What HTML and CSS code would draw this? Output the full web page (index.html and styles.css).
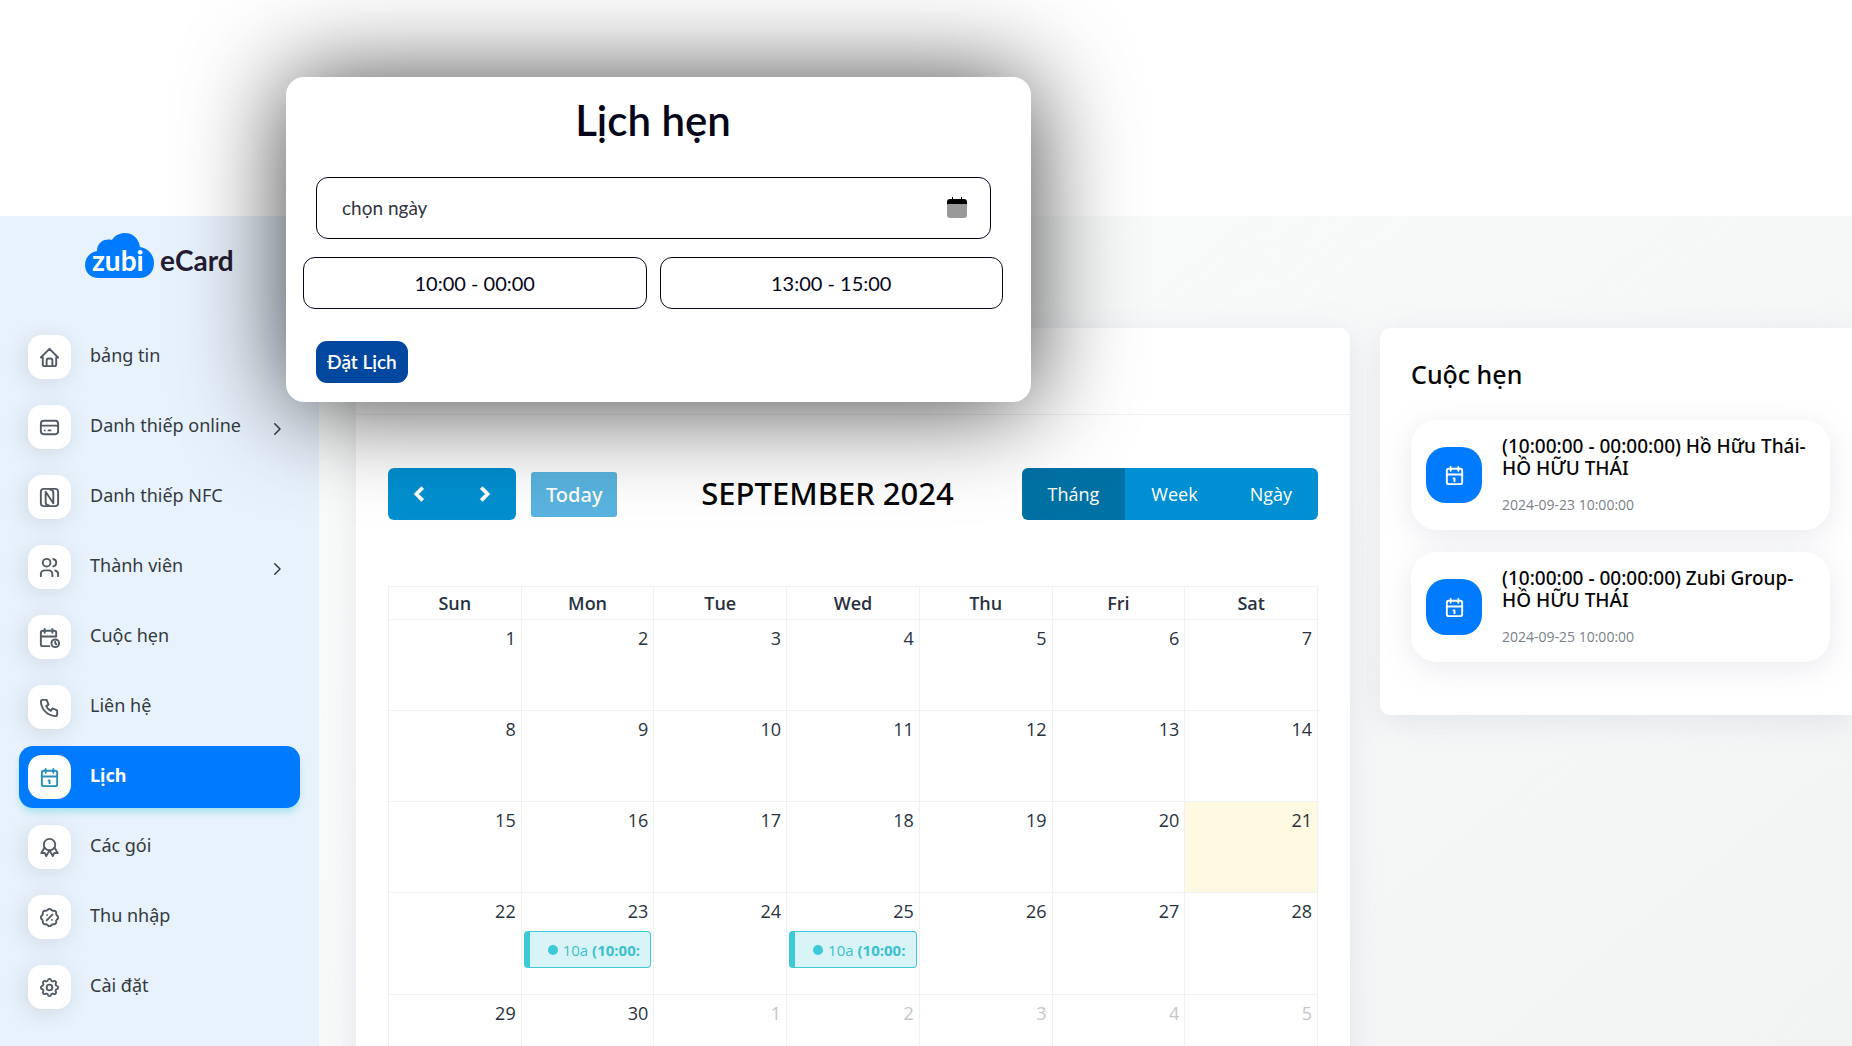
FILE: index.html
```html
<!DOCTYPE html>
<html lang="vi">
<head>
  <meta charset="UTF-8">
  <meta name="viewport" content="width=device-width, initial-scale=1">
  <title>Zubi eCard - Lịch</title>
  <link rel="stylesheet" href="styles.css">
</head>
<body>

  <!-- icons used more than once -->
  <svg class="sprite" aria-hidden="true">
    <symbol id="icon-calendar" viewBox="0 0 24 24">
      <rect x="4" y="5" width="16" height="16" rx="2"/>
      <path d="M16 3v4M8 3v4M4 11h16M11 15h1v3"/>
    </symbol>
    <symbol id="icon-chevron" viewBox="0 0 24 24">
      <path d="M9 5l7 7-7 7"/>
    </symbol>
  </svg>

  <div class="dashboard">
    <aside class="sidebar">
      <a class="logo" href="#" aria-label="zubi eCard">
        <svg width="150" height="48" viewBox="0 0 150 48">
          <path fill="#007bff" d="M15 46C6 46 1 40 1 33c0-7 5-13 12-14C13 11 20 6 28 8 31 3 36 1 41 1c8 0 14 6 15 14 8 1 14 8 14 16 0 9-6 15-15 15z"/>
          <text class="logo-zubi" x="8" y="39">zubi</text>
          <text class="logo-ecard" x="76" y="39">eCard</text>
        </svg>
      </a>

      <nav class="menu">
        <a class="menu-item" href="#">
          <span class="menu-icon"><svg class="icon" viewBox="0 0 24 24"><path d="M5 12H3l9-9 9 9h-2M5 12v7a2 2 0 0 0 2 2h10a2 2 0 0 0 2-2v-7M9 21v-6a2 2 0 0 1 2-2h2a2 2 0 0 1 2 2v6"/></svg></span>
          <span class="menu-text">bảng tin</span>
        </a>
        <a class="menu-item" href="#">
          <span class="menu-icon"><svg class="icon" viewBox="0 0 24 24"><rect x="3" y="5" width="18" height="14" rx="3"/><path d="M3 10h18M7 15h.01M11 15h2"/></svg></span>
          <span class="menu-text">Danh thiếp online</span>
          <svg class="menu-arrow" viewBox="0 0 24 24"><use href="#icon-chevron"/></svg>
        </a>
        <a class="menu-item" href="#">
          <span class="menu-icon"><svg class="icon" viewBox="0 0 24 24"><path d="M11 20a3 3 0 0 1-3-3V6l8 12M13 4a3 3 0 0 1 3 3v11"/><rect x="3" y="3" width="18" height="18" rx="3"/></svg></span>
          <span class="menu-text">Danh thiếp NFC</span>
        </a>
        <a class="menu-item" href="#">
          <span class="menu-icon"><svg class="icon" viewBox="0 0 24 24"><circle cx="9" cy="7" r="4"/><path d="M3 21v-2a4 4 0 0 1 4-4h4a4 4 0 0 1 4 4v2M16 3.13a4 4 0 0 1 0 7.75M21 21v-2a4 4 0 0 0-3-3.85"/></svg></span>
          <span class="menu-text">Thành viên</span>
          <svg class="menu-arrow" viewBox="0 0 24 24"><use href="#icon-chevron"/></svg>
        </a>
        <a class="menu-item" href="#">
          <span class="menu-icon"><svg class="icon" viewBox="0 0 24 24"><path d="M11.8 21H5a2 2 0 0 1-2-2V7a2 2 0 0 1 2-2h12a2 2 0 0 1 2 2v4M15 3v4M7 3v4M3 11h16M18 16.5V18l1 1"/><circle cx="18" cy="18" r="4"/></svg></span>
          <span class="menu-text">Cuộc hẹn</span>
        </a>
        <a class="menu-item" href="#">
          <span class="menu-icon"><svg class="icon" viewBox="0 0 24 24"><path d="M5 4h4l2 5-2.5 1.5a11 11 0 0 0 5 5L15 13l5 2v4a2 2 0 0 1-2 2A16 16 0 0 1 3 6a2 2 0 0 1 2-2"/></svg></span>
          <span class="menu-text">Liên hệ</span>
        </a>
        <a class="menu-item active" href="#">
          <span class="menu-icon"><svg class="icon"><use href="#icon-calendar"/></svg></span>
          <span class="menu-text">Lịch</span>
        </a>
        <a class="menu-item" href="#">
          <span class="menu-icon"><svg class="icon" viewBox="0 0 24 24"><circle cx="12" cy="9" r="6"/><path d="M12 15l3.4 5.89 1.598-3.233 3.598.232-3.4-5.889M6.802 12l-3.4 5.89L7 17.657l1.598 3.232 3.4-5.889"/></svg></span>
          <span class="menu-text">Các gói</span>
        </a>
        <a class="menu-item" href="#">
          <span class="menu-icon"><svg class="icon" viewBox="0 0 24 24"><path d="M9 15l6-6M9.5 9.5v.01M14.5 14.5v.01M5 7.2A2.2 2.2 0 0 1 7.2 5h1a2.2 2.2 0 0 0 1.55-.64l.7-.7a2.2 2.2 0 0 1 3.12 0l.7.7a2.2 2.2 0 0 0 1.55.64h1a2.2 2.2 0 0 1 2.2 2.2v1a2.2 2.2 0 0 0 .64 1.55l.7.7a2.2 2.2 0 0 1 0 3.12l-.7.7a2.2 2.2 0 0 0-.64 1.55v1a2.2 2.2 0 0 1-2.2 2.2h-1a2.2 2.2 0 0 0-1.55.64l-.7.7a2.2 2.2 0 0 1-3.12 0l-.7-.7a2.2 2.2 0 0 0-1.55-.64h-1a2.2 2.2 0 0 1-2.2-2.2v-1a2.2 2.2 0 0 0-.64-1.55l-.7-.7a2.2 2.2 0 0 1 0-3.12l.7-.7A2.2 2.2 0 0 0 5 8.2z"/></svg></span>
          <span class="menu-text">Thu nhập</span>
        </a>
        <a class="menu-item" href="#">
          <span class="menu-icon"><svg class="icon" viewBox="0 0 24 24"><path d="M10.325 4.317c.426-1.756 2.924-1.756 3.35 0a1.724 1.724 0 0 0 2.573 1.066c1.543-.94 3.31.826 2.37 2.37a1.724 1.724 0 0 0 1.065 2.572c1.756.426 1.756 2.924 0 3.35a1.724 1.724 0 0 0-1.066 2.573c.94 1.543-.826 3.31-2.37 2.37a1.724 1.724 0 0 0-2.572 1.065c-.426 1.756-2.924 1.756-3.35 0a1.724 1.724 0 0 0-2.573-1.066c-1.543.94-3.31-.826-2.37-2.37a1.724 1.724 0 0 0-1.065-2.572c-1.756-.426-1.756-2.924 0-3.35a1.724 1.724 0 0 0 1.066-2.573c-.94-1.543.826-3.31 2.37-2.37 1 .608 2.296.07 2.572-1.065z"/><circle cx="12" cy="12" r="3"/></svg></span>
          <span class="menu-text">Cài đặt</span>
        </a>
      </nav>
    </aside>

    <main class="content">
      <section class="card calendar-card">
        <div class="card-header"></div>
        <div class="card-body">
          <div class="toolbar">
            <div class="toolbar-left">
              <div class="btn-group">
                <button class="btn-nav" type="button" aria-label="Tháng trước"><svg class="nav-icon" viewBox="0 0 24 24"><path d="M15 5l-7 7 7 7"/></svg></button>
                <button class="btn-nav" type="button" aria-label="Tháng sau"><svg class="nav-icon" viewBox="0 0 24 24"><use href="#icon-chevron"/></svg></button>
              </div>
              <button class="btn-today" type="button" disabled>Today</button>
            </div>
            <h2 class="toolbar-title">SEPTEMBER 2024</h2>
            <div class="btn-group">
              <button class="btn-view selected" type="button">Tháng</button>
              <button class="btn-view" type="button">Week</button>
              <button class="btn-view" type="button">Ngày</button>
            </div>
          </div>

          <table class="calendar">
            <thead>
              <tr><th>Sun</th><th>Mon</th><th>Tue</th><th>Wed</th><th>Thu</th><th>Fri</th><th>Sat</th></tr>
            </thead>
            <tbody>
              <tr><td>1</td><td>2</td><td>3</td><td>4</td><td>5</td><td>6</td><td>7</td></tr>
              <tr><td>8</td><td>9</td><td>10</td><td>11</td><td>12</td><td>13</td><td>14</td></tr>
              <tr><td>15</td><td>16</td><td>17</td><td>18</td><td>19</td><td>20</td><td class="today">21</td></tr>
              <tr class="has-events">
                <td>22</td>
                <td>23<a class="event" href="#"><span class="dot"></span><span class="event-text">10a <b>(10:00:</b></span></a></td>
                <td>24</td>
                <td>25<a class="event" href="#"><span class="dot"></span><span class="event-text">10a <b>(10:00:</b></span></a></td>
                <td>26</td><td>27</td><td>28</td>
              </tr>
              <tr><td>29</td><td>30</td><td class="other">1</td><td class="other">2</td><td class="other">3</td><td class="other">4</td><td class="other">5</td></tr>
            </tbody>
          </table>
        </div>
      </section>

      <section class="card side-card">
        <h4 class="side-title">Cuộc hẹn</h4>
        <ul class="appointments">
          <li class="appointment">
            <span class="appointment-icon"><svg class="icon"><use href="#icon-calendar"/></svg></span>
            <div class="appointment-info">
              <h5 class="appointment-name">(10:00:00 - 00:00:00) Hồ Hữu Thái-<br>HỒ HỮU THÁI</h5>
              <small class="appointment-date">2024-09-23 10:00:00</small>
            </div>
          </li>
          <li class="appointment">
            <span class="appointment-icon"><svg class="icon"><use href="#icon-calendar"/></svg></span>
            <div class="appointment-info">
              <h5 class="appointment-name">(10:00:00 - 00:00:00) Zubi Group-<br>HỒ HỮU THÁI</h5>
              <small class="appointment-date">2024-09-25 10:00:00</small>
            </div>
          </li>
        </ul>
      </section>
    </main>
  </div>

  <!-- booking popup -->
  <form class="popup">
    <h1 class="popup-title">Lịch hẹn</h1>
    <div class="date-field">
      <input class="date-input" type="text" placeholder="chọn ngày" aria-label="chọn ngày">
      <svg class="date-icon" width="20" height="21" viewBox="0 0 20 21" aria-hidden="true">
        <path fill="#999" d="M0 7h20v11a3 3 0 0 1-3 3H3a3 3 0 0 1-3-3z"/>
        <path fill="#000" d="M0 7V5a3 3 0 0 1 3-3h2V0h1v2h8V0h1v2h2a3 3 0 0 1 3 3v2z"/>
      </svg>
    </div>
    <div class="slots">
      <button class="slot" type="button">10:00 - 00:00</button>
      <button class="slot" type="button">13:00 - 15:00</button>
    </div>
    <button class="btn-book" type="submit">Đặt Lịch</button>
  </form>

</body>
</html>
```
FILE: styles.css
```css
* {
  box-sizing: border-box;
}

body {
  margin: 0;
  height: 100vh;
  overflow: hidden;
  background: #fff;
  color: #293240;
  font-family: "Open Sans", "Noto Sans", sans-serif;
  font-size: 18px;
}

button,
input {
  font-family: inherit;
}

.sprite {
  display: none;
}

.icon,
.menu-arrow,
.nav-icon {
  fill: none;
  stroke: currentColor;
  stroke-width: 2;
  stroke-linecap: round;
  stroke-linejoin: round;
}

.icon {
  width: 23px;
  height: 23px;
}

.dashboard {
  display: flex;
  height: 100%;
  padding-top: 216px;
}

/* sidebar */
.sidebar {
  width: 319px;
  flex-shrink: 0;
  background: #e8f2fc;
}

.logo {
  display: block;
  padding: 16px 0 0 84px;
  height: 110px;
}

.logo-zubi,
.logo-ecard {
  font-family: "Lato", sans-serif;
  font-size: 28px;
  font-weight: 700;
}

.logo-zubi {
  fill: #fff;
}

.logo-ecard {
  fill: #251b33;
}

.menu {
  display: flex;
  flex-direction: column;
  gap: 8px;
  padding: 0 19px;
}

.menu-item {
  display: flex;
  align-items: center;
  height: 62px;
  padding: 0 14px 0 9px;
  border-radius: 14px;
  color: #333a40;
  font-family: "Noto Sans", "Open Sans", sans-serif;
  text-decoration: none;
}

.menu-icon {
  display: flex;
  align-items: center;
  justify-content: center;
  width: 43px;
  height: 44px;
  margin-right: 19px;
  border-radius: 14px;
  background: #fff;
  color: #525b65;
  box-shadow: -3px 4px 23px rgba(0, 0, 0, 0.1);
}

.menu-text {
  flex: 1;
  padding-bottom: 4px;
}

.menu-arrow {
  width: 18px;
  height: 18px;
  margin-top: 4px;
}

.menu-item.active {
  background: #007bff;
  color: #fff;
  font-weight: 700;
  box-shadow: 0 5px 7px -1px rgba(62, 201, 214, 0.4);
}

.menu-item.active .menu-icon {
  color: #2a8fb5;
  box-shadow: none;
}

/* content */
.content {
  display: flex;
  flex: 1;
  align-items: flex-start;
  gap: 30px;
  min-width: 0;
  padding: 112px 0 0 37px;
  background: linear-gradient(141deg, #fafcfb 0%, #f7f9f9 50%, #f2f4f4 100%);
}

.card {
  background: #fff;
  border-radius: 10px;
  box-shadow: 0 6px 30px rgba(182, 186, 203, 0.3);
}

.calendar-card {
  flex: 1;
  min-width: 0;
}

.card-header {
  height: 87px;
  border-bottom: 1px solid #f1f1f1;
}

.card-body {
  padding: 53px 32px;
}

.toolbar {
  display: flex;
  align-items: center;
  justify-content: space-between;
  margin-bottom: 66px;
}

.toolbar-left {
  display: flex;
  align-items: center;
  gap: 15px;
  padding-right: 16px;
}

.btn-group {
  display: flex;
  border-radius: 6px;
  overflow: hidden;
}

.btn-nav,
.btn-view {
  display: flex;
  align-items: center;
  justify-content: center;
  height: 52px;
  border: none;
  background: #008fd0;
  color: #fff;
  font-size: 18px;
  font-weight: 500;
  cursor: pointer;
}

.btn-nav {
  width: 64px;
}

.btn-view {
  padding: 0 26px;
}

.btn-view.selected {
  background: #0071a4;
}

.nav-icon {
  width: 22px;
  height: 22px;
  stroke-width: 4;
  stroke-linecap: butt;
  stroke-linejoin: miter;
}

.btn-today {
  height: 45px;
  padding: 0 15px;
  border: none;
  border-radius: 3px;
  background: #59b4df;
  color: #fff;
  font-family: "Noto Sans", "Open Sans", sans-serif;
  font-size: 20px;
  font-weight: 500;
}

.toolbar-title {
  margin: 0;
  color: #060606;
  font-family: "Noto Sans", "Open Sans", sans-serif;
  font-size: 31px;
  font-weight: 500;
  line-height: 40px;
  padding-bottom: 2px;
}

.calendar {
  width: 100%;
  table-layout: fixed;
  border-collapse: collapse;
}

.calendar th,
.calendar td {
  border: 1px solid #f0f1f1;
}

.calendar th {
  height: 33px;
  padding: 0;
  font-weight: 600;
}

.calendar td {
  height: 91px;
  padding: 5px 5px 0 0;
  font-weight: 400;
  line-height: 26px;
  text-align: right;
  vertical-align: top;
}

.calendar .has-events td {
  height: 102px;
}

.calendar .today {
  background: #fefae1;
}

.calendar .other {
  color: #c4c7ca;
}

.event {
  display: flex;
  align-items: center;
  height: 37px;
  margin: 7px -3px 0 2px;
  padding: 0 6px 0 18px;
  border: 1px solid #3ec9d6;
  border-left-width: 6px;
  border-radius: 4px;
  background: #d8f4f7;
  color: #3ec0cc;
  font-size: 15px;
  text-decoration: none;
}

.dot {
  flex-shrink: 0;
  width: 10px;
  height: 10px;
  margin-right: 5px;
  border-radius: 50%;
  background: #3ec9d6;
}

.event-text {
  white-space: nowrap;
}

/* appointments */
.side-card {
  width: 472px;
  flex-shrink: 0;
  padding: 29px 22px 53px 31px;
  border-radius: 10px 0 0 10px;
}

.side-title {
  margin: 0 0 29px;
  color: #060606;
  font-family: "Noto Sans", "Open Sans", sans-serif;
  font-size: 25px;
  font-weight: 500;
  line-height: 34px;
}

.appointments {
  display: flex;
  flex-direction: column;
  gap: 22px;
  margin: 0;
  padding: 0;
  list-style: none;
}

.appointment {
  display: flex;
  align-items: center;
  gap: 20px;
  height: 110px;
  padding: 0 15px;
  border-radius: 26px;
  background: #fff;
  box-shadow: 0 6px 30px rgba(182, 186, 203, 0.3);
}

.appointment-icon {
  display: flex;
  flex-shrink: 0;
  align-items: center;
  justify-content: center;
  width: 56px;
  height: 56px;
  border-radius: 20px;
  background: #007bff;
  color: #fff;
}

.appointment-name {
  margin: 0 0 16px;
  color: #060606;
  font-family: "Noto Sans", "Open Sans", sans-serif;
  font-size: 19px;
  font-weight: 500;
  line-height: 22px;
}

.appointment-date {
  display: block;
  color: #7b8187;
  font-size: 14px;
  line-height: 20px;
}

/* popup */
.popup {
  position: absolute;
  top: 77px;
  left: 286px;
  width: 745px;
  padding: 15px 28px 19px 17px;
  border-radius: 18px;
  background: #fff;
  color: #06061a;
  font-family: "Lato", "Open Sans", sans-serif;
  box-shadow: 0 3px 100px rgba(0, 0, 0, 0.75);
}

.popup-title {
  margin: 0 0 29px;
  font-size: 42px;
  font-weight: 600;
  line-height: 56px;
  text-align: center;
}

.date-field {
  display: flex;
  align-items: center;
  height: 62px;
  margin: 0 12px 18px 13px;
  padding: 0 23px 1px 25px;
  border: 1px solid #06061a;
  border-radius: 12px;
}

.date-input {
  flex: 1;
  padding: 0;
  border: none;
  outline: none;
  background: none;
  font-size: 19px;
}

.date-input::placeholder {
  color: #33333f;
}

.slots {
  display: grid;
  grid-template-columns: 1fr 1fr;
  gap: 13px;
  margin-bottom: 32px;
}

.slot {
  height: 52px;
  border: 1px solid #06061a;
  border-radius: 12px;
  background: #fff;
  color: #06061a;
  font-size: 20px;
}

.btn-book {
  height: 42px;
  margin-left: 13px;
  padding: 0 11px 1px;
  border: none;
  border-radius: 11px;
  background: #0047a0;
  color: #fff;
  font-size: 19px;
  font-weight: 600;
}
```
